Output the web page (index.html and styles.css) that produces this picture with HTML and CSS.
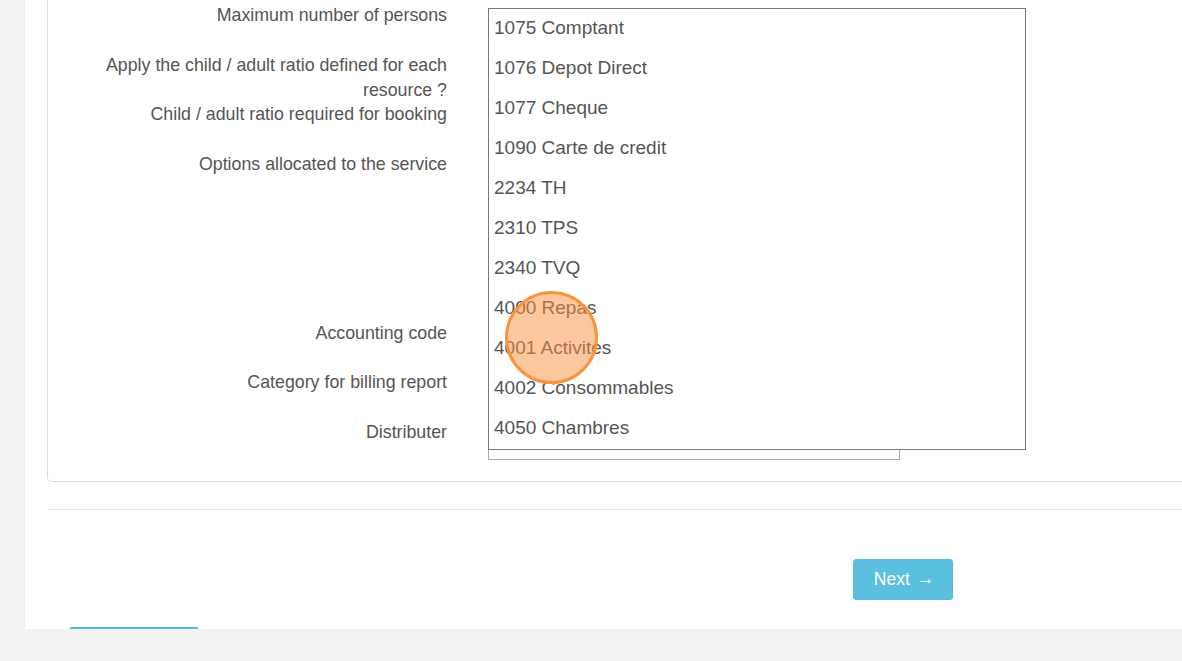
FILE: index.html
```html
<!DOCTYPE html>
<html lang="en">
<head>
    <meta charset="UTF-8">
    <title>Service - Billing</title>
    <link rel="stylesheet" href="styles.css">
</head>
<body>
    <div class="page">
        <div class="gutter"></div>
        <div class="main">
            <div class="card">
                <div class="row row-1">
                    <label>Maximum number of persons</label>
                    <div class="field"></div>
                </div>
                <div class="row row-2">
                    <label>Apply the child / adult ratio defined for each resource ?<br>Child / adult ratio required for booking</label>
                    <div class="field"></div>
                </div>
                <div class="row row-3">
                    <label>Options allocated to the service</label>
                    <div class="field"></div>
                </div>
                <div class="row row-4">
                    <label>Accounting code</label>
                    <div class="field"></div>
                </div>
                <div class="row row-5">
                    <label>Category for billing report</label>
                    <div class="field"></div>
                </div>
                <div class="row row-6">
                    <label>Distributer</label>
                    <div class="field"><div class="select"></div></div>
                </div>

                <ul class="listbox">
                    <li>1075 Comptant</li>
                    <li>1076 Depot Direct</li>
                    <li>1077 Cheque</li>
                    <li>1090 Carte de credit</li>
                    <li>2234 TH</li>
                    <li>2310 TPS</li>
                    <li>2340 TVQ</li>
                    <li>4000 Repas</li>
                    <li>4001 Activites</li>
                    <li>4002 Consommables</li>
                    <li>4050 Chambres</li>
                </ul>
            </div>

            <hr class="sep">

            <div class="actions">
                <button class="btn btn-next">Next <span class="arrow">&rarr;</span></button>
            </div>
            <div class="actions-bottom">
                <button class="btn btn-save"></button>
            </div>
        </div>
    </div>

    <div class="cursor"></div>
</body>
</html>
```

FILE: styles.css
```css
body {
    margin: 0;
    background: #f2f2f2;
    font-family: "Liberation Sans", Arial, sans-serif;
    color: #555;
}
.page {
    display: flex;
    height: 629px;
}
.gutter {
    width: 24px;
    border-right: 1px solid #ececec;
    background: #f3f3f3;
}
.main {
    flex: 1;
    background: #fff;
    overflow: hidden;
    padding-left: 22px;
}
.card {
    position: relative;
    border: 1px solid #ddd;
    border-top: none;
    border-radius: 0 0 0 5px;
    margin-right: -30px;
    padding: 3px 0 21px;
}
.row {
    display: grid;
    grid-template-columns: 399px 538px;
    column-gap: 40px;
    align-items: start;
}
.row label {
    font-size: 17.8px;
    line-height: 24.5px;
    text-align: right;
}
.row-1 { height: 50px; }
.row-2 { height: 99px; }
.row-3 { height: 169px; }
.row-4 { height: 49px; }
.row-5 { height: 50px; }
.row-6 { height: 40px; }
.select {
    box-sizing: border-box;
    width: 412px;
    height: 40px;
    margin-left: 1px;
    border: 1px solid #aaa;
}
.listbox {
    position: absolute;
    left: 440px;
    top: 8px;
    width: 536px;
    margin: 0;
    padding: 0;
    list-style: none;
    background: #fff;
    border: 1px solid #777;
}
.listbox li {
    height: 40px;
    line-height: 38px;
    padding-left: 5px;
    font-size: 19px;
}
.sep {
    margin: 27px 0 0;
    border: none;
    border-top: 1px solid #e3e3e3;
}
.actions {
    padding: 49px 0 0 806px;
}
.btn {
    font-family: "Liberation Sans", Arial, sans-serif;
    color: #fff;
    background: #5bc0de;
    border: 1px solid #55bcdb;
    border-radius: 3px;
    cursor: pointer;
}
.btn-next {
    width: 100px;
    height: 41px;
    font-size: 17.5px;
    padding: 0 0 0 2px;
}
.arrow {
    position: relative;
    top: -1px;
    margin-left: 2px;
}
.actions-bottom {
    padding: 27px 0 0 22px;
}
.btn-save {
    width: 130px;
    height: 40px;
    border-color: #4fb0cf;
}
.cursor {
    position: absolute;
    left: 505px;
    top: 291px;
    width: 87px;
    height: 87px;
    border: 3px solid #f7953f;
    border-radius: 50%;
    background: rgba(251, 143, 60, 0.5);
}
```
